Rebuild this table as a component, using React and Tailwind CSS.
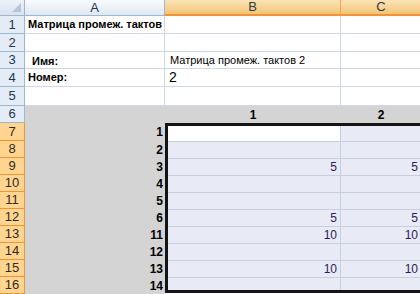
import React from "react";

// row header heights for the top part of the sheet
const topRows = [
  { n: 1, align: "items-center" },
  { n: 2, align: "items-center" },
  { n: 3, align: "items-end" },
  { n: 4, align: "items-center" },
  { n: 5, align: "items-center" },
];

const matrixRows = [
  { label: "1", b: "", c: "" },
  { label: "2", b: "", c: "" },
  { label: "3", b: "5", c: "5" },
  { label: "4", b: "", c: "" },
  { label: "5", b: "", c: "" },
  { label: "6", b: "5", c: "5" },
  { label: "11", b: "10", c: "10" },
  { label: "12", b: "", c: "" },
  { label: "13", b: "10", c: "10" },
  { label: "14", b: "", c: "" },
];

function BlueRowHead({ n }) {
  return (
    <div className="flex items-center justify-center bg-[#e4ecf7] border-r border-b border-[#9eb6ce] text-[13px] text-[#27364a]">
      {n}
    </div>
  );
}

function OrangeRowHead({ n }) {
  return (
    <div className="flex items-center justify-center bg-[#ffd58f] border-r border-b border-[#f29436] text-[13px] text-[#2f2a22]">
      {n}
    </div>
  );
}

function App() {
  return (
    <div
      className="w-[420px] h-[294px] overflow-hidden bg-white"
      style={{ fontFamily: '"Liberation Sans", Arial, sans-serif' }}
    >
      <div className="grid grid-cols-[25px_140px_176px_80px] grid-rows-[16px_18px_18px_17px_18px_19px_17px_18px_repeat(9,17px)]">
        {/* column headers */}
        <div className="relative bg-gradient-to-b from-[#eef3fa] to-[#d9e2ee] border-r border-b border-[#9eb6ce]">
          <div className="absolute right-[3px] bottom-[3px] w-0 h-0 border-l-[9px] border-l-transparent border-b-[9px] border-b-[#b7c4d6]" />
        </div>
        <div className="flex items-center justify-center bg-gradient-to-b from-[#f9fbfd] to-[#e1e8f2] border-r border-b border-[#9eb6ce] text-[13px] text-[#27364a]">
          A
        </div>
        <div className="flex items-center justify-center bg-gradient-to-b from-[#fbe3b6] to-[#f3c574] border-r border-[#f1a455] border-b-2 border-b-[#f29436] text-[13px] text-[#2f3a48]">
          B
        </div>
        <div className="flex items-center justify-center bg-gradient-to-b from-[#fbe3b6] to-[#f3c574] border-b-2 border-b-[#f29436] text-[13px] text-[#2f3a48]">
          C
        </div>

        {/* rows 1-5 */}
        {topRows.map((r) => (
          <React.Fragment key={r.n}>
            <BlueRowHead n={r.n} />
            <div className={`flex ${r.align} border-r border-b border-[#d0d7e5] text-[11px] leading-[13px] text-black overflow-hidden whitespace-nowrap`}>
              {r.n === 1 && <span className="pl-[3px] font-bold">Матрица промеж. тактов</span>}
              {r.n === 3 && <span className="pl-[7px] font-bold">Имя:</span>}
              {r.n === 4 && <span className="pl-[3px] font-bold">Номер:</span>}
            </div>
            <div className="flex items-center border-r border-b border-[#d0d7e5] text-black whitespace-nowrap">
              {r.n === 3 && <span className="pl-[5px] text-[11px]">Матрица промеж. тактов 2</span>}
              {r.n === 4 && <span className="pl-[4px] text-[14px]">2</span>}
            </div>
            <div className="border-b border-[#d0d7e5]" />
          </React.Fragment>
        ))}

        {/* row 6: matrix column captions */}
        <BlueRowHead n={6} />
        <div className="bg-[#d4d4d4]" />
        <div className="flex items-center justify-center bg-[#d4d4d4] text-[12px] font-bold text-black">1</div>
        <div className="flex items-center justify-center bg-[#d4d4d4] text-[12px] font-bold text-black">2</div>

        {/* matrix block */}
        <div className="col-start-3 col-span-2 row-start-8 row-span-10 h-[170px] self-start border-l-[3px] border-t-[3px] border-b-[3px] border-[#141414] grid grid-cols-[173px_1fr] grid-rows-[16px_repeat(8,17px)_1fr]">
          {matrixRows.map((m, i) => {
            const last = i === matrixRows.length - 1;
            return (
              <React.Fragment key={m.label}>
                <div
                  className={`flex items-center justify-end pr-[3px] border-r border-[#c8cede] text-[12px] text-[#2c1a5c] ${
                    i === 0 ? "bg-white" : "bg-[#e8eaf5]"
                  } ${last ? "" : "border-b"}`}
                >
                  {m.b}
                </div>
                <div
                  className={`flex items-center justify-end pr-[3px] bg-[#e8eaf5] border-[#c8cede] text-[12px] text-[#2c1a5c] ${
                    last ? "" : "border-b"
                  }`}
                >
                  {m.c}
                </div>
              </React.Fragment>
            );
          })}
        </div>

        {/* rows 7-16: orange headers and bold row captions */}
        {matrixRows.map((m, i) => (
          <React.Fragment key={m.label}>
            <OrangeRowHead n={7 + i} />
            <div className="flex items-center justify-end pr-[2px] bg-[#d4d4d4] text-[12px] font-bold text-black">
              {m.label}
            </div>
          </React.Fragment>
        ))}
      </div>
    </div>
  );
}

export default App;
